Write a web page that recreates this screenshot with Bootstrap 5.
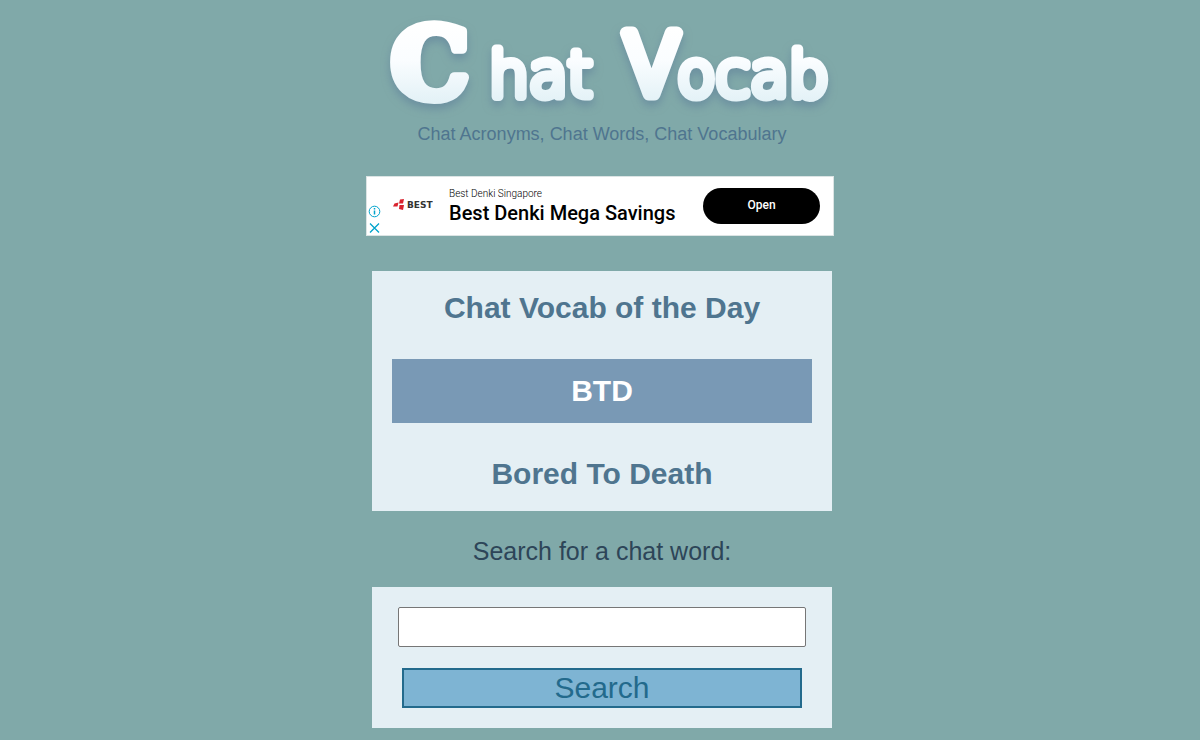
<!DOCTYPE html>
<html lang="en">
<head>
<meta charset="utf-8">
<meta name="viewport" content="width=device-width, initial-scale=1">
<title>Chat Vocab</title>
<link href="https://cdn.jsdelivr.net/npm/bootstrap@5.3.0/dist/css/bootstrap.min.css" rel="stylesheet">
<style>
body { background: #80a9a9; color: #4f758f; font-family: "Liberation Sans", Arial, sans-serif; }
.site-col { max-width: 464px; }
.wordmark { height: 102px; overflow: visible; filter: drop-shadow(0 5px 4px #66899ecc); }
.wordmark text { fill: url(#shine); stroke: url(#shine); stroke-linejoin: round; }
.wm-c { font-family: "DejaVu Serif", serif; font-size: 98px; font-weight: 700; stroke-width: 10px; }
.wm-v { font-family: Roboto, sans-serif; font-size: 86px; font-weight: 300; stroke-width: 13px; }
.wm-low { font-family: "DejaVu Sans", sans-serif; font-size: 63px; font-weight: 200; stroke-width: 9px; }
.tagline { font-size: 18px; line-height: 24px; }
.ad { max-width: 468px; height: 60px; margin: 30px auto 35px; border: 1px solid #dbe4e4; color: #000; font-family: Roboto, sans-serif; }
.ad-marks { width: 14px; }
.ad-brand { font-size: 10px; line-height: 14px; font-weight: 300; }
.ad-title { font-size: 20px; line-height: 24px; font-weight: 500; }
.ad .btn { width: 117px; height: 36px; font-size: 12px; font-weight: 500; line-height: 12px; padding: 0 0 3px; margin-right: 13px; }
.panel { background: #e4eff4; padding: 20px; }
.panel-text { font-size: 30px; line-height: 34px; font-weight: 700; }
.acronym { background: #7999b5; padding: 15px; margin: 34px 0; }
.search-label { font-size: 25px; line-height: 30px; color: #2d4558; margin: 25px 0 21px; }
.word-input { width: 408px; height: 40px; border: 1px solid #767676; border-radius: 2px; }
.search-btn { width: 400px; height: 40px; margin-top: 21px; border: 2px solid #236a8c; background: #7eb4d3; color: #236a8c; font-size: 30px; line-height: 34px; }
</style>
</head>
<body>
<header class="site-col mx-auto ps-1 pt-3 text-center">
  <h1 class="m-0 lh-1">
    <svg class="wordmark d-block w-100" viewBox="0 0 460 102" role="img" aria-label="Chat Vocab">
      <defs>
        <linearGradient id="shine" gradientUnits="userSpaceOnUse" x1="0" y1="8" x2="0" y2="88">
          <stop offset="0" stop-color="#ffffff"/><stop offset=".45" stop-color="#fafdff"/><stop offset="1" stop-color="#e2f1f6"/>
        </linearGradient>
      </defs>
      <text class="wm-c" x="19" y="82">C</text>
      <text class="wm-low" x="117" y="80">hat</text>
      <text class="wm-v" x="253" y="78">V</text>
      <text class="wm-low" x="305" y="80">ocab</text>
    </svg>
  </h1>
  <p class="tagline m-0 mt-1">Chat Acronyms, Chat Words, Chat Vocabulary</p>
</header>

<aside class="ad bg-white d-flex align-items-center" aria-label="Advertisement">
  <div class="ad-marks align-self-end d-flex flex-column align-items-center">
    <svg width="13" height="13" viewBox="0 0 13 13" fill="none" stroke="#00a3cc" aria-hidden="true"><circle cx="6.5" cy="6.5" r="5.3"/><path d="M6.5 5.5v4M6.5 3v1.4" stroke-width="1.5"/></svg>
    <svg class="mt-1" width="13" height="13" viewBox="0 0 13 13" stroke="#00a3cc" stroke-width="1.3" aria-hidden="true"><path d="M2 1.500l9 9M11 1.500l-9 9"/></svg>
  </div>
  <svg class="ms-2" width="44" height="16" viewBox="0 0 44 16" aria-label="Best" role="img">
    <g fill="#d9232e"><path d="M11 1.500 15 1 14 5.500H10zM5.500 5.500 9.500 4.500 8.500 8.500H4zM10.500 7H15L14 12 10 11z"/></g>
    <text x="18" y="10" font-family="DejaVu Sans, sans-serif" font-size="9" font-weight="700" fill="#333">BEST</text>
  </svg>
  <div class="flex-grow-1 ps-3">
    <div class="ad-brand">Best Denki Singapore</div>
    <div class="ad-title">Best Denki Mega Savings</div>
  </div>
  <button type="button" class="btn btn-dark bg-black rounded-pill border-0">Open</button>
</aside>

<main class="site-col mx-auto ps-1 text-center">
  <section class="panel panel-text">
    <h2 class="panel-text m-0">Chat Vocab of the Day</h2>
    <div class="acronym text-white">BTD</div>
    <div>Bored To Death</div>
  </section>
  <form>
    <label class="search-label d-block" for="word">Search for a chat word:</label>
    <div class="panel d-flex flex-column align-items-center">
      <input class="word-input mw-100 px-2" type="text" id="word" name="word">
      <button class="search-btn mw-100 p-0" type="submit">Search</button>
    </div>
  </form>
</main>
<script src="https://cdn.jsdelivr.net/npm/bootstrap@5.3.0/dist/js/bootstrap.bundle.min.js"></script>
</body>
</html>
